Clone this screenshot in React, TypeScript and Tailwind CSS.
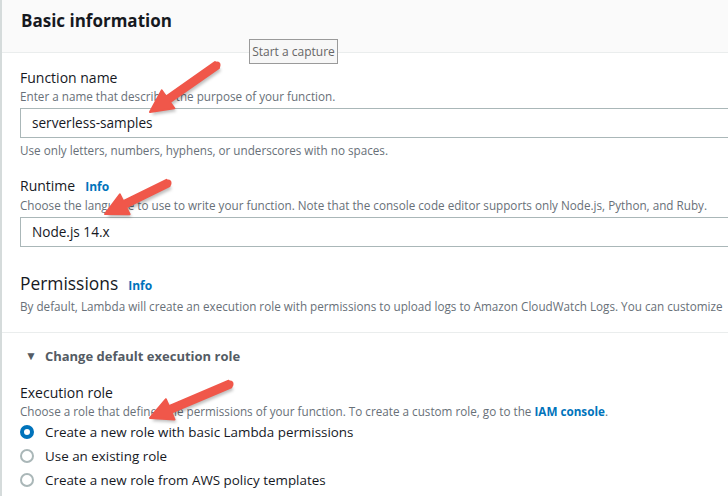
import React from "react";

const font = { fontFamily: '"Open Sans", "Noto Sans", Arial, sans-serif' };

function Arrow({ x1, y1, x2, y2 }: { x1: number; y1: number; x2: number; y2: number }) {
  // tail (x1,y1) to tip (x2,y2)
  const dx = x2 - x1;
  const dy = y2 - y1;
  const len = Math.sqrt(dx * dx + dy * dy);
  const ux = dx / len;
  const uy = dy / len;
  const px = -uy;
  const py = ux;
  const head = 22;
  const hw = 11;
  const sw = 3.5;
  const bx = x2 - ux * head;
  const by = y2 - uy * head;
  const pts = [
    [x1 + px * sw, y1 + py * sw],
    [bx + px * sw, by + py * sw],
    [bx + px * hw, by + py * hw],
    [x2, y2],
    [bx - px * hw, by - py * hw],
    [bx - px * sw, by - py * sw],
    [x1 - px * sw, y1 - py * sw],
  ]
    .map((p) => p.join(","))
    .join(" ");
  return (
    <g>
      <polygon points={pts} fill="#00000040" transform="translate(2,3)" filter="url(#blur)" />
      <polygon points={pts} fill="#f0574a" strokeLinejoin="round" stroke="#f0574a" strokeWidth="2" />
      <circle cx={x1} cy={y1} r={sw} fill="#f0574a" />
    </g>
  );
}

function Radio({ checked, label }: { checked?: boolean; label: string }) {
  return (
    <div className="flex h-6 items-center gap-[11px] pl-[18px]">
      {checked ? (
        <span className="h-[14px] w-[14px] rounded-full border-[4px] border-[#0073bb] bg-white" />
      ) : (
        <span className="h-[14px] w-[14px] rounded-full border-2 border-[#aab7b8] bg-white" />
      )}
      <span className="text-[13.4px] text-[#16191f]">{label}</span>
    </div>
  );
}

export default function App() {
  return (
    <div className="relative h-[496px] w-[728px] overflow-hidden bg-white" style={font}>
      <div className="h-full border-l-2 border-[#d5dbdb]">
        {/* header */}
        <div className="h-[53px] border-b border-[#eaeded] bg-[#fafafa] pl-[19px] pt-[9px]">
          <h2 className="text-[17px] leading-6 font-bold text-[#16191f]">Basic information</h2>
        </div>

        <div className="pl-[18px]">
          <div className="mt-[15px] text-[14px] leading-5 text-[#16191f]">Function name</div>
          <div className="text-[11.7px] leading-4 text-[#687078]">
            Enter a name that describes the purpose of your function.
          </div>
          <div className="mt-[4px] flex h-[30px] w-[800px] items-center border border-[#aab7b8] pl-[11px] text-[13.6px] text-[#16191f]">
            serverless-samples
          </div>
          <div className="mt-[4px] text-[11.7px] leading-4 text-[#687078]">
            Use only letters, numbers, hyphens, or underscores with no spaces.
          </div>

          <div className="mt-[18px] flex items-baseline gap-[10px] text-[14px] leading-5 text-[#16191f]">
            Runtime <span className="text-[12px] font-bold text-[#0073bb]">Info</span>
          </div>
          <div className="text-[11.7px] leading-4 text-[#687078]">
            Choose the language to use to write your function. Note that the console code editor supports only
            Node.js, Python, and Ruby.
          </div>
          <div className="mt-[4px] flex h-[30px] w-[800px] items-center border border-[#aab7b8] pl-[11px] text-[13.6px] text-[#16191f]">
            Node.js 14.x
          </div>

          <div className="mt-[24px] flex items-baseline gap-[10px] text-[17.4px] leading-6 text-[#16191f]">
            Permissions <span className="text-[12px] font-bold text-[#0073bb]">Info</span>
          </div>
          <div className="whitespace-nowrap text-[11.7px] leading-4 text-[#687078]">
            By default, Lambda will create an execution role with permissions to upload logs to Amazon CloudWatch
            Logs. You can customize
          </div>
        </div>

        <div className="mt-[18px] border-t border-[#eaeded]" />

        <div className="pl-[18px]">
          <div className="mt-[13px] flex items-center gap-[8px] pl-[5px] text-[13px] font-bold leading-5 text-[#545b64]">
            <span className="text-[12px]">▼</span>
            Change default execution role
          </div>

          <div className="mt-[17px] text-[14px] leading-5 text-[#16191f]">Execution role</div>
          <div className="text-[11.7px] leading-4 text-[#687078]">
            Choose a role that defines the permissions of your function. To create a custom role, go to the{" "}
            <span className="font-bold text-[#0073bb]">IAM console</span>.
          </div>
        </div>
        <div className="mt-[1px]">
          <Radio checked label="Create a new role with basic Lambda permissions" />
          <Radio label="Use an existing role" />
          <Radio label="Create a new role from AWS policy templates" />
        </div>
      </div>

      {/* capture tooltip */}
      <div className="absolute left-[249px] top-[39px] flex h-[25px] w-[89px] items-center justify-center border border-[#9a9a9a] bg-[#f7f7f7] text-[12px] text-[#666]">
        Start a capture
      </div>

      {/* annotation arrows */}
      <svg className="pointer-events-none absolute left-0 top-0" width="728" height="496">
        <defs>
          <filter id="blur" x="-20%" y="-20%" width="140%" height="140%">
            <feGaussianBlur stdDeviation="1.5" />
          </filter>
        </defs>
        <Arrow x1={217} y1={65} x2={150} y2={112} />
        <Arrow x1={168} y1={183} x2={105} y2={214} />
        <Arrow x1={230} y1={384} x2={150} y2={418} />
      </svg>
    </div>
  );
}
